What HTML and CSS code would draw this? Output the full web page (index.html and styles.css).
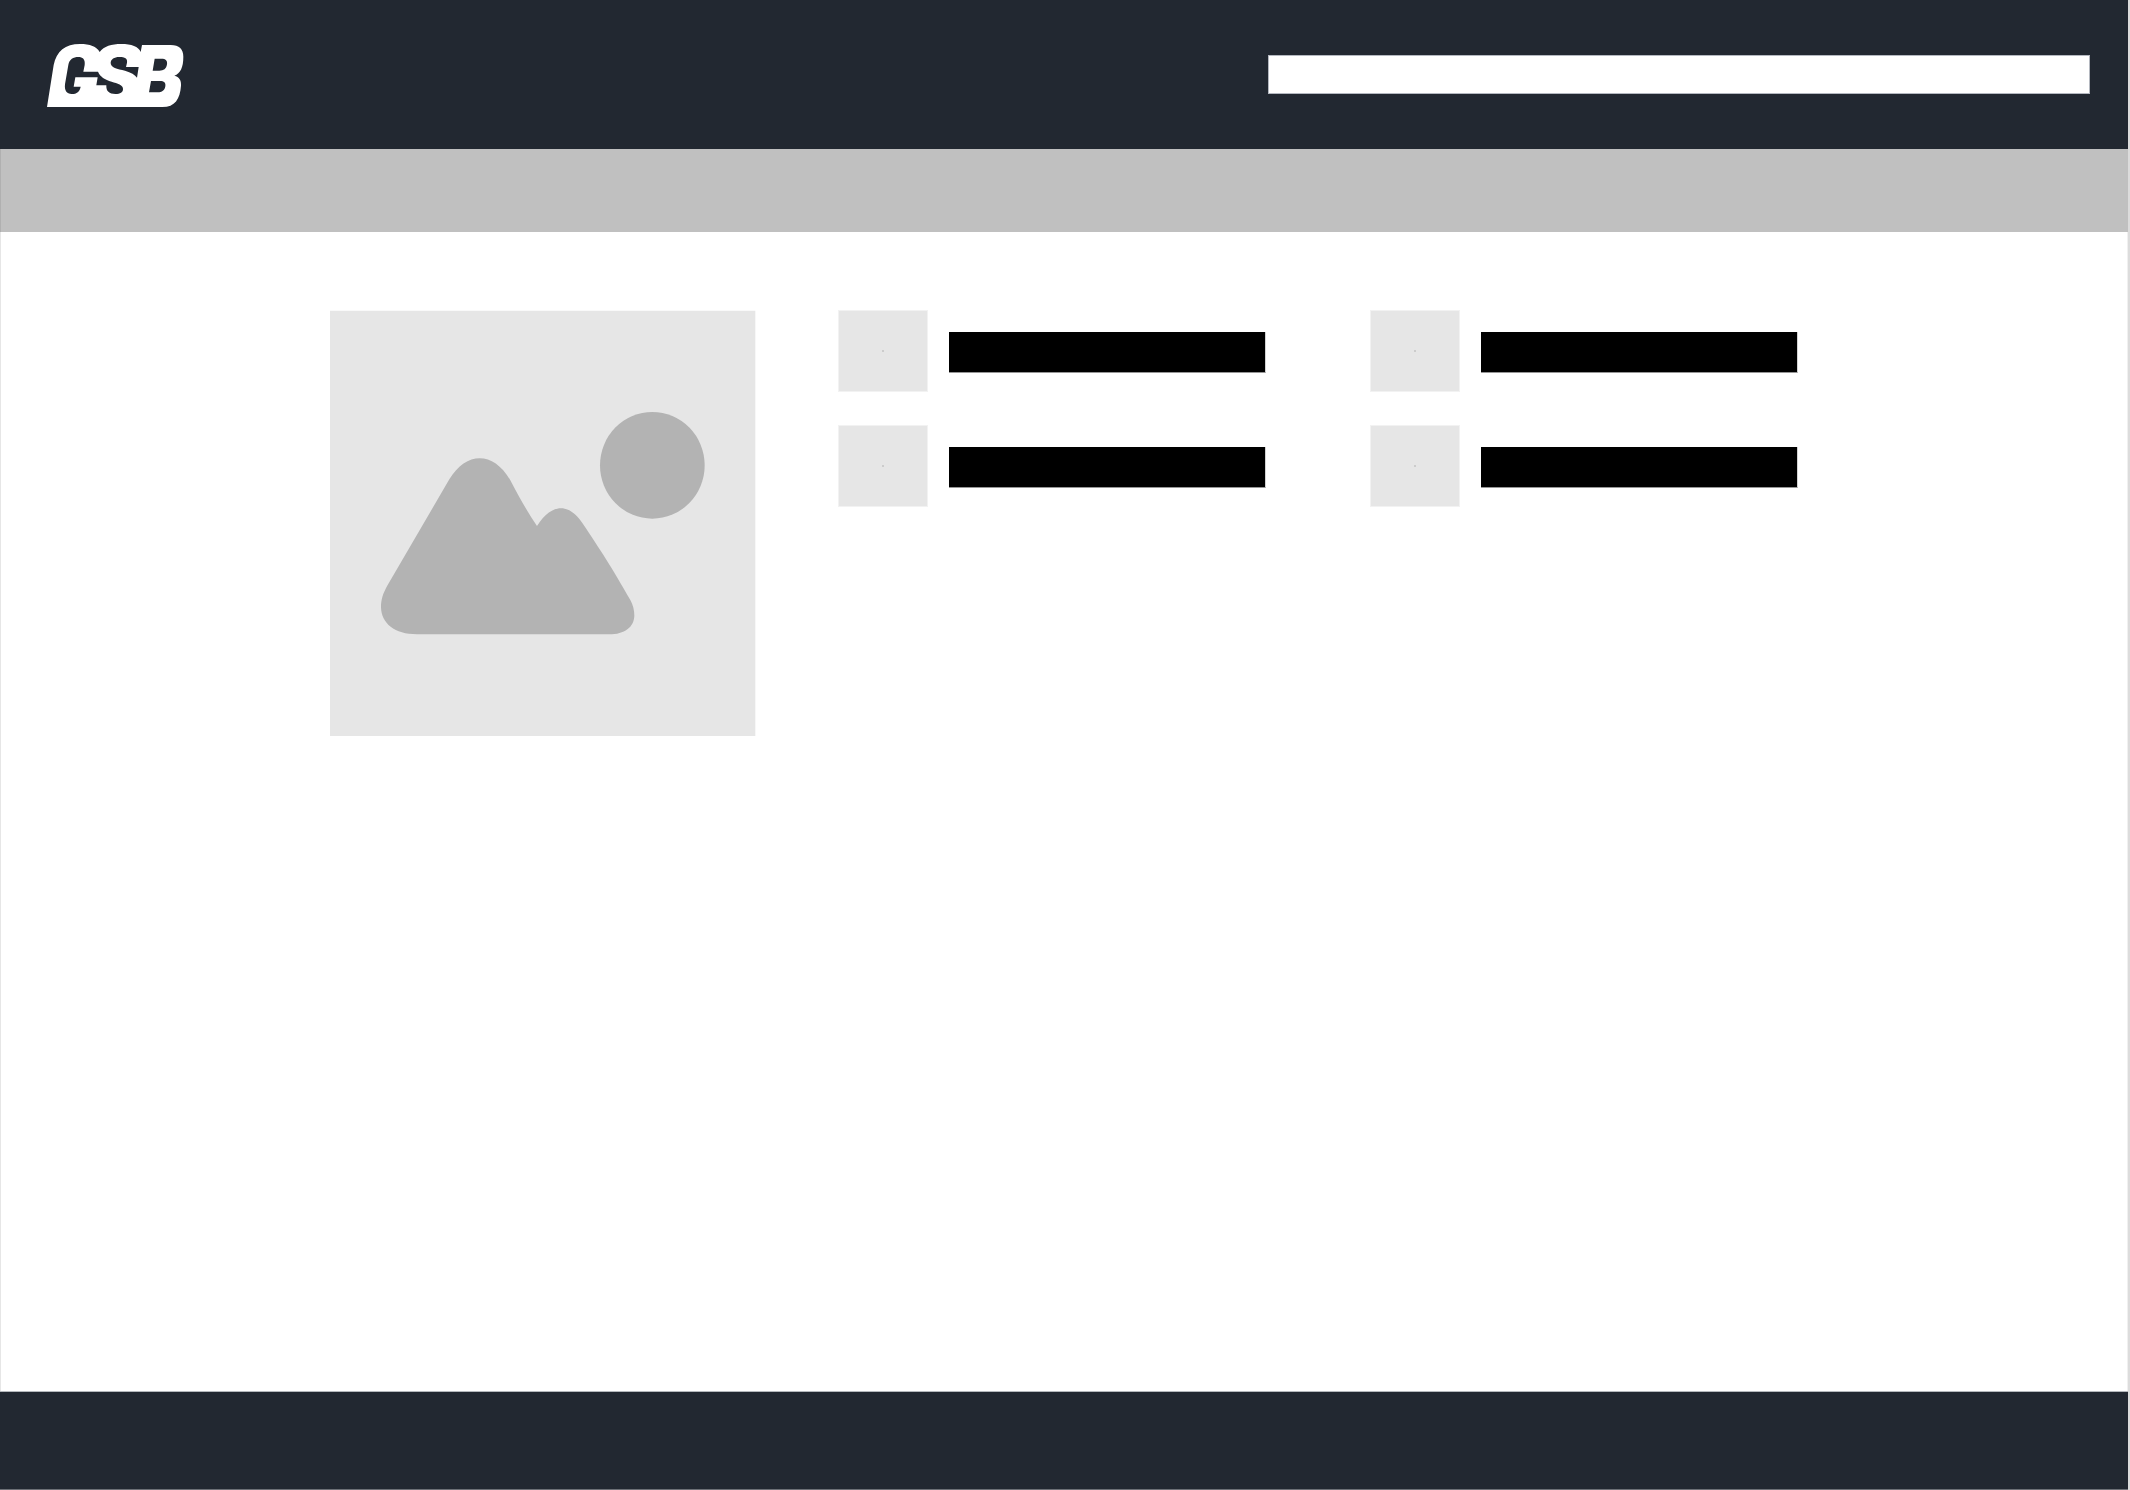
FILE: index.html
```html
<!DOCTYPE html>
<html lang="en">
<head>
  <meta charset="utf-8">
  <meta name="viewport" content="width=device-width, initial-scale=1">
  <title>GSB</title>
  <link rel="stylesheet" href="styles.css">
</head>
<body>
  <div class="page">
    <header class="header">
      <a class="logo" href="#" aria-label="GSB home">
        <svg class="logo-mark" viewBox="51 42 411 189" aria-hidden="true">
          <path fill="#fff" fill-rule="evenodd" d="M51 231L71 105C79 64 106 42 150 42C180 42 200 50 209 66C222 49 244 42 274 42C304 42 326 50 332 66L336 45H422C448 45 460 58 460 80C460 112 451 130 433 137C448 141 454 150 453 167C450 207 435 231 397 231Z
            M160 125L164 105C166 88 158 81 145 81C130 81 118 88 115 105L105 163C103 182 110 192 125 192C141 192 149 185 152 170H131L136 142H203L199 166H229C228 184 238 192 256 192C271 192 279 187 279 177C280 165 262 160 245 155C225 149 210 140 204 125Z
            M321 143L326 111H288L291 98C293 86 285 81 268 81C252 81 243 88 242 98C241 112 262 117 285 122C303 127 315 134 321 143Z
            M374 86H394C407 86 413 92 411 103C409 117 401 122 388 122H368Z
            M363 153H390C402 153 408 158 406 169C404 181 396 187 383 187H357Z"/>
        </svg>
      </a>
      <input class="search" type="search" aria-label="Search">
    </header>
    <nav class="navbar" aria-label="Main"></nav>
    <main class="main">
      <div class="product">
        <svg class="picture" viewBox="30 30 1278 1278" role="img" aria-label="Product picture">
          <path fill="#e6e6e6" d="M30 32h1276v1276H30z"/>
          <ellipse cx="997" cy="496" rx="157" ry="160" fill="#b3b3b3"/>
          <path fill="#b3b3b3" d="M388 538C439 453 521 453 571 541C594 586 622 635 651 678C696 609 746 609 787 669C840 748 875 801 931 900C939 915 943 930 943 947C942 981 914 1003 867 1003H291C224 1003 184 970 183 922C183 898 189 880 203 855Z"/>
        </svg>
        <ul class="specs">
          <li class="spec"><span class="thumb"></span><span class="bar"></span></li>
          <li class="spec"><span class="thumb"></span><span class="bar"></span></li>
          <li class="spec"><span class="thumb"></span><span class="bar"></span></li>
          <li class="spec"><span class="thumb"></span><span class="bar"></span></li>
        </ul>
      </div>
    </main>
    <footer class="footer"></footer>
  </div>
</body>
</html>
```
FILE: styles.css
```css
* {
  box-sizing: border-box;
}

body {
  margin: 0;
  background: #fff;
  font-family: "Liberation Sans", Arial, sans-serif;
}

.page {
  display: flex;
  flex-direction: column;
  min-height: 100vh;
  border-right: 2px solid #dcdcdc;
}

.header {
  display: flex;
  align-items: center;
  justify-content: space-between;
  height: 149px;
  padding: 0 38px 0 47px;
  background: #222831;
}

.logo {
  padding-top: 2px;
}

.logo-mark {
  display: block;
  width: 137px;
  height: 63px;
}

.search {
  width: 50%;
  max-width: 822px;
  height: 39px;
  margin: 0;
  padding: 0 12px;
  border: 1px solid #b4b8c0;
  border-radius: 0;
  background: #fff;
  font: 16px "Liberation Sans", Arial, sans-serif;
}

.navbar {
  height: 83px;
  background: #c0c0c0;
  border-left: 1px solid #b0b0b0;
}

.main {
  flex: 1;
  padding: 78px 24px;
  border-left: 1px solid #e6e6e6;
  border-right: 1px solid #f0f0f0;
}

.product {
  display: flex;
  align-items: flex-start;
  gap: 82px;
  max-width: 1468px;
  margin: 0 auto;
}

.picture {
  flex: 0 1 426px;
  min-width: 0;
}

.specs {
  flex: 1;
  display: grid;
  grid-template-columns: 1fr 1fr;
  gap: 33px 104px;
  margin: 0;
  padding: 0;
  list-style: none;
}

.spec {
  display: flex;
  align-items: center;
  gap: 21px;
}

.thumb {
  display: flex;
  align-items: center;
  justify-content: center;
  width: 90px;
  height: 82px;
  border: 1px solid #f2f2f2;
  background: #e6e6e6;
}

.thumb::before {
  content: "";
  width: 2px;
  height: 2px;
  background: #cccccc;
}

.bar {
  flex: 1;
  height: 41px;
  margin-top: 3px;
  border-bottom: 1px solid #969696;
  border-right: 1px solid #d2d2d2;
  background: #000;
}

.footer {
  height: 99px;
  border-top: 1px solid #b4b8bc;
  border-bottom: 1px solid #6c7076;
  background: #222831;
}
```
